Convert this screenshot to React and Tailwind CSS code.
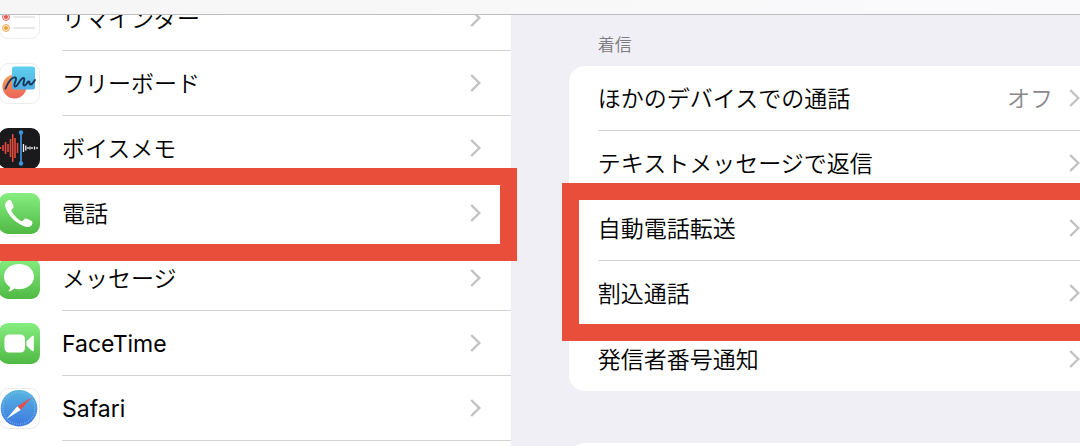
import clsx from "clsx";

const Tile = ({ children }) => (
  <svg
    viewBox="0 0 41 41"
    className="-ml-px size-[41px] shrink-0"
    aria-hidden="true"
  >
    <defs>
      <linearGradient id="green" x1="0" y1="0" x2="0" y2="1">
        <stop offset="0" stopColor="#86ee80" />
        <stop offset="1" stopColor="#50b944" />
      </linearGradient>
    </defs>
    {children}
  </svg>
);

const WhiteBase = () => (
  <rect
    x="0.5"
    y="0.5"
    width="40"
    height="40"
    rx="9"
    fill="#fff"
    stroke="#ececec"
  />
);

const GreenBase = () => (
  <rect width="41" height="41" rx="9" fill="url(#green)" />
);

const RemindersIcon = () => (
  <Tile>
    <WhiteBase />
    {[
      ["#3b82f6", 8],
      ["#e4574e", 19],
      ["#eda23c", 30],
    ].map(([color, y]) => (
      <g key={y}>
        <circle cx="7" cy={y} r="3.4" fill="#fff" stroke={color} />
        <circle cx="7" cy={y} r="2.1" fill={color} />
        <path d={`M14.5 ${y}H36`} stroke="#d2d2d2" />
      </g>
    ))}
  </Tile>
);

const FreeformIcon = () => (
  <Tile>
    <defs>
      <linearGradient id="sky" x1="0" y1="0" x2="0" y2="1">
        <stop offset="0" stopColor="#5fd0ee" />
        <stop offset="1" stopColor="#4faee4" />
      </linearGradient>
      <linearGradient id="coral" x1="0" y1="0" x2="0" y2="1">
        <stop offset="0" stopColor="#f5a05c" />
        <stop offset="1" stopColor="#ec6358" />
      </linearGradient>
    </defs>
    <WhiteBase />
    <circle cx="15.5" cy="23.5" r="12" fill="url(#coral)" />
    <rect x="13" y="3.5" width="23" height="23" rx="2.5" fill="url(#sky)" />
    <path
      d="M6.5 25.5C9 19 13.5 13.5 16.3 14.5C19 15.5 13.5 22.5 15.8 23.5C18.5 24.5 21.5 14.5 24.5 15C27 15.5 22.5 22 25.3 22.5C27.3 23 28 18.5 29.8 18.5C31.3 18.5 29.5 21.5 31.5 21.5C33.5 21.5 34.5 19 36 17"
      fill="none"
      stroke="#17365a"
      strokeWidth="1.9"
      strokeLinecap="round"
    />
  </Tile>
);

const redBars = [
  [1.5, 1],
  [4, 3],
  [6.5, 6],
  [9, 4],
  [11.5, 9],
  [13.7, 14],
  [16, 10],
  [18.5, 5],
];
const whiteBars = [
  [24.5, 4],
  [26.8, 2.5],
  [29, 1],
  [31, 1.5],
  [33, 1],
  [35.5, 1.5],
  [38, 1],
];

const VoiceMemosIcon = () => (
  <Tile>
    <rect width="41" height="41" rx="9" fill="#1a1a1c" />
    {redBars.map(([x, h]) => (
      <path
        key={x}
        d={`M${x} ${20 - h}V${20 + h}`}
        stroke="#e4493e"
        strokeWidth="1.6"
      />
    ))}
    {whiteBars.map(([x, h]) => (
      <path
        key={x}
        d={`M${x} ${20 - h}V${20 + h}`}
        stroke="#f2f2f2"
        strokeWidth="1.3"
      />
    ))}
    <path d="M22 4.5V35.5" stroke="#3f94e0" strokeWidth="1.7" />
    <circle cx="22" cy="4.5" r="2.2" fill="#3f94e0" />
    <circle cx="22" cy="35.5" r="2.2" fill="#3f94e0" />
  </Tile>
);

const PhoneIcon = () => (
  <Tile>
    <GreenBase />
    <path
      d="M8.3 7.8C10 6.5 11.8 6.9 12.8 9L14.2 12.2C14.8 13.6 14.6 14.6 13.6 15.6L12.9 16.3C12.3 17 12.3 17.8 12.8 18.7C15 22.3 18 25.4 21.7 27.7C22.5 28.2 23.3 28.1 24 27.4L24.9 26.5C25.9 25.5 26.9 25.3 28.3 25.9L31.9 27.5C33.6 28.3 33.9 29.7 33 31.4C31.5 33.9 28.8 34.5 25.8 33.5C16.8 30.3 9.3 23.1 6.5 14.6C5.6 11.8 6.2 9.4 8.3 7.8Z"
      fill="#fff"
    />
  </Tile>
);

const MessagesIcon = () => (
  <Tile>
    <GreenBase />
    <path
      d="M20 6C28.5 6 35 11.3 35 18.5C35 25.7 28.5 31.2 20 31.2C18.3 31.2 16.8 31 15.3 30.6C13.7 32.2 11.7 33.2 9.3 33.4C10.5 32.1 11.2 30.6 11.2 28.9C7.3 26.6 5 22.8 5 18.5C5 11.3 11.5 6 20 6Z"
      fill="#fff"
    />
  </Tile>
);

const FaceTimeIcon = () => (
  <Tile>
    <GreenBase />
    <rect x="5.5" y="11.5" width="20.5" height="18" rx="4.5" fill="#fff" />
    <path
      d="M27.5 18.3L32.8 13.3C33.8 12.5 34.8 12.8 34.8 14.1V27C34.8 28.3 33.8 28.6 32.8 27.8L27.5 22.8Z"
      fill="#fff"
    />
  </Tile>
);

const SafariIcon = () => (
  <Tile>
    <defs>
      <linearGradient id="compass" x1="0" y1="0" x2="0" y2="1">
        <stop offset="0" stopColor="#57b5e0" />
        <stop offset="1" stopColor="#3c78e0" />
      </linearGradient>
    </defs>
    <WhiteBase />
    <circle cx="20" cy="20.2" r="18.3" fill="url(#compass)" />
    <circle
      cx="20"
      cy="20.2"
      r="16"
      fill="none"
      stroke="#8fc6f0"
      strokeWidth="1.6"
      strokeDasharray="0.5 1.594"
    />
    <path d="M32.5 9.5L18.3 18.3L21.7 22.1Z" fill="#e2524a" />
    <path d="M7.5 31L18.3 18.3L21.7 22.1Z" fill="#fff" />
  </Tile>
);

const Chevron = () => (
  <svg
    viewBox="0 0 11 18"
    className="h-[18px] w-[11px] shrink-0"
    fill="none"
    stroke="#c2c2c4"
    strokeWidth="2.4"
    aria-hidden="true"
  >
    <path d="M1.2 1L9.3 9L1.2 17" />
  </svg>
);

const apps = [
  { name: "リマインダー", Icon: RemindersIcon },
  { name: "フリーボード", Icon: FreeformIcon },
  { name: "ボイスメモ", Icon: VoiceMemosIcon },
  { name: "電話", Icon: PhoneIcon, marked: true },
  { name: "メッセージ", Icon: MessagesIcon },
  { name: "FaceTime", Icon: FaceTimeIcon, latin: true },
  { name: "Safari", Icon: SafariIcon, latin: true },
];

const AppRow = ({ name, Icon, marked, latin }) => (
  <li className="relative">
    <a href="#" className="flex h-[65px] items-center gap-[22px]">
      <Icon />
      <span className="flex h-full flex-1 items-center justify-between border-b border-[#d3d3d5] pr-[30px]">
        <span className={clsx("pt-0.5", latin && "font-normal")}>{name}</span>
        <Chevron />
      </span>
    </a>
    {marked && (
      <div className="pointer-events-none absolute -top-[13px] -right-[6px] -bottom-[15px] left-0 z-10 border-y-[17px] border-r-[17px] border-[#e94e3b]" />
    )}
  </li>
);

const SettingRow = ({ name, value, last }) => (
  <a
    href="#"
    className={clsx(
      "ml-[29px] flex h-[65px] items-center border-[#d3d3d5]",
      !last && "border-b"
    )}
  >
    <span className="flex-1 pt-0.5">{name}</span>
    {value && <span className="mr-4 pt-0.5 text-[#8a8a8e]">{value}</span>}
    <Chevron />
  </a>
);

const App = () => {
  return (
    <div
      lang="ja"
      className="h-screen overflow-hidden bg-[#f0eff5] font-['Inter','Noto_Sans_CJK_JP',sans-serif] text-[23px] leading-8 font-[350] text-black"
    >
      <header className="relative z-20 h-[15px] border-b border-[#bebec0] bg-linear-to-r from-[#f6f6f6] to-[#fafafc]" />
      <div className="flex">
        <nav className="-mt-[29px] w-[47.3%] bg-white">
          <ul>
            {apps.map((app) => (
              <AppRow key={app.name} {...app} />
            ))}
          </ul>
          <div className="h-5" />
        </nav>
        <main className="flex-1 pt-[15px] pl-[58px]">
          <h2 className="mb-1.5 pl-[29px] text-[17px] leading-[30px] text-[#7c7c81]">
            着信
          </h2>
          <section className="rounded-l-2xl bg-white">
            <SettingRow name="ほかのデバイスでの通話" value="オフ" />
            <SettingRow name="テキストメッセージで返信" />
            <div className="relative">
              <SettingRow name="自動電話転送" />
              <SettingRow name="割込通話" />
              <div className="pointer-events-none absolute -top-[13px] right-0 -bottom-[15px] -left-[7px] border-y-[17px] border-l-[17px] border-[#e94e3b]" />
            </div>
            <SettingRow name="発信者番号通知" last />
          </section>
          <section className="mt-[52px] h-16 rounded-l-2xl bg-white" />
        </main>
      </div>
    </div>
  );
};

export default App;
